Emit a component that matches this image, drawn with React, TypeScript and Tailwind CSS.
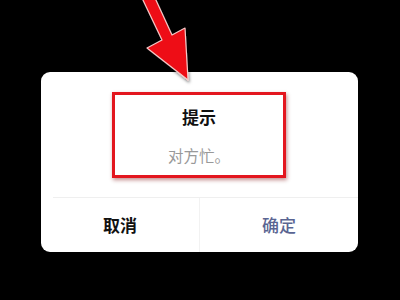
export default function App() {
  const font = { fontFamily: '"Noto Sans CJK SC", "Noto Sans", sans-serif' }
  return (
    <div className="relative w-[400px] h-[300px] bg-black overflow-hidden" style={font}>
      <div className="pt-[72px] pl-[41px]">
        <div className="w-[317px] h-[180px] bg-white rounded-[9px] flex flex-col">
          <div className="h-[125px] pt-[20px] pl-[71px]">
            <div className="w-[174px] h-[86px] border-[3px] border-[#e3161e] shadow-[1px_2px_4px_rgba(120,0,0,0.45)] flex flex-col items-center pt-[12px]">
              <div className="text-[17px] leading-[20px] font-bold text-[#111]">提示</div>
              <div className="mt-[18px] text-[15.5px] leading-[20px] text-[#999]">对方忙。</div>
            </div>
          </div>
          <div className="ml-[12px] h-px bg-[#efefef]" />
          <div className="flex flex-1">
            <div className="w-[159px] flex items-center justify-center border-r border-[#f2f2f2] text-[17px] font-bold text-[#111]">
              取消
            </div>
            <div className="flex-1 flex items-center justify-center text-[17px] font-medium text-[#5a6592]">
              确定
            </div>
          </div>
        </div>
      </div>
      <svg className="absolute left-0 top-0" width="400" height="100" viewBox="0 0 400 100">
        <defs>
          <filter id="sh" x="-20%" y="-20%" width="140%" height="140%">
            <feDropShadow dx="1" dy="2" stdDeviation="1.5" floodColor="#000" floodOpacity="0.5" />
          </filter>
        </defs>
        <polygon
          points="142,-2 162,40 147,48 188,80 185,28 172,35 155,-2"
          fill="#ee0f12"
          stroke="#f6c8c8"
          strokeWidth="1.2"
          strokeLinejoin="round"
          filter="url(#sh)"
        />
      </svg>
    </div>
  )
}
